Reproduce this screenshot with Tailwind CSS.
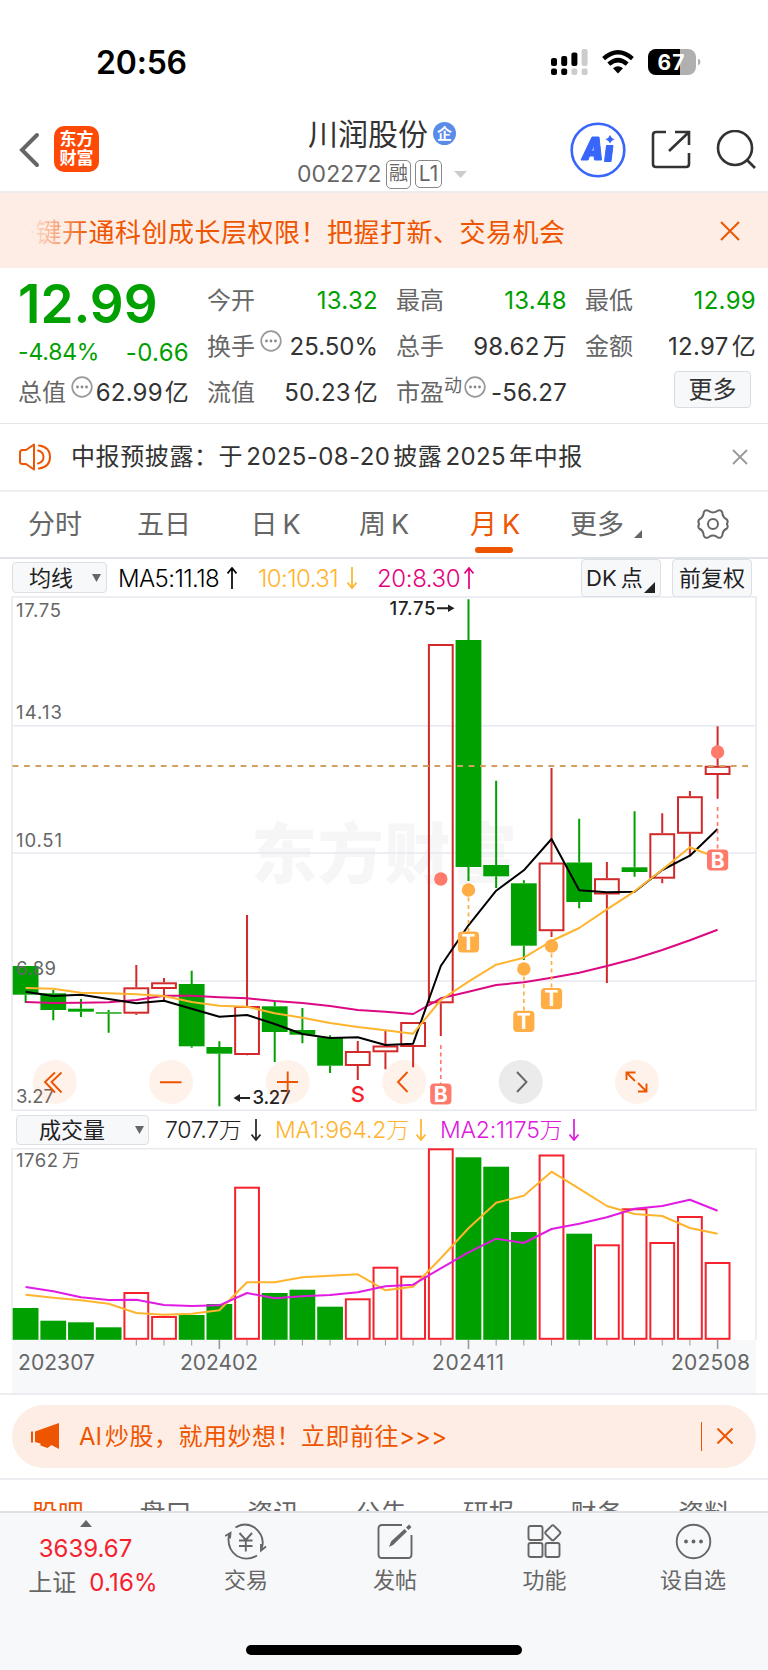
<!DOCTYPE html>
<html lang="zh-CN">
<head>
    <meta charset="UTF-8">
    <meta name="viewport" content="width=device-width, initial-scale=1.0">
    <title>川润股份 002272</title>
    <script src="https://cdn.jsdelivr.net/npm/@tailwindcss/browser@4"></script>
</head>
<body class="w-[768px] h-[1670px] overflow-hidden bg-white text-[#333] font-['Inter','Noto_Sans_CJK_SC',sans-serif] flex flex-col whitespace-nowrap">

    <!-- Status bar -->
    <div class="h-[104px] shrink-0 flex items-start pl-[96px] pr-[67px] pt-[42px]">
        <span class="text-[32px] leading-[41px] font-semibold text-black tracking-[-0.2px]">20:56</span>
        <div class="ml-auto flex items-center h-[40px] gap-[14px]">
            <svg width="37" height="26" viewBox="0 0 37 26">
                <g fill="#000">
                    <rect x="0" y="9" width="6" height="8" rx="2"/><rect x="10.200" y="7" width="6" height="10" rx="2"/><rect x="20.400" y="3.500" width="6" height="13.500" rx="2"/>
                    <rect x="0" y="19.500" width="6" height="6.500" rx="2"/><rect x="10.200" y="19.500" width="6" height="6.500" rx="2"/>
                </g>
                <g fill="#ccc">
                    <rect x="30.600" y="0" width="6" height="17" rx="2"/><rect x="20.400" y="19.500" width="6" height="6.500" rx="2"/><rect x="30.600" y="19.500" width="6" height="6.500" rx="2"/>
                </g>
            </svg>
            <svg width="32" height="24" viewBox="0 0 32 24" fill="none" stroke="#000" stroke-width="4.400">
                <path d="M1.600 8.600Q16 -4 30.400 8.600"/>
                <path d="M6.800 14.200Q16 6 25.200 14.200"/>
                <path d="M11 18.300Q16 14.200 21 18.300L16 23.600Z" fill="#000" stroke="none"/>
            </svg>
            <svg width="53" height="26" viewBox="0 0 53 26">
                <defs><clipPath id="bat"><rect width="48" height="26" rx="8"/></clipPath></defs>
                <g clip-path="url(#bat)"><rect width="48" height="26" fill="#b0b0b0"/><rect width="32" height="26" fill="#000"/></g>
                <path d="M50 9.500q2.500 1 2.500 3.500t-2.500 3.500z" fill="#b0b0b0"/>
                <text x="9.500" y="20.500" font-size="21" font-weight="700" fill="#fff" textLength="27">67</text>
            </svg>
        </div>
    </div>

    <!-- Header -->
    <header class="relative h-[89px] shrink-0 border-b-2 border-[#ececee] flex items-start">
        <svg class="ml-[18px] mt-[28px]" width="22" height="36" viewBox="0 0 22 36" fill="none" stroke="#666" stroke-width="4"><path d="M19 3L4 18L19 33" stroke-linecap="round"/></svg>
        <div class="ml-[14px] mt-[22px] w-[45px] h-[46px] rounded-[10px] bg-[#ff4a05] text-white font-bold text-[17px] leading-[19px] flex flex-col items-center justify-center">
            <span>东方</span><span>财富</span>
        </div>
        <div class="absolute left-[296px] top-0 w-[175px]">
            <div class="flex items-center h-[60px] pl-[12px] text-[30px]">
                <span>川润股份</span>
                <span class="ml-[5px] -mt-[2px] size-[23px] rounded-full bg-[#5b8be8] text-white text-[15px] leading-none font-bold flex items-center justify-center">企</span>
            </div>
            <div class="flex items-center h-[28px] -mt-[4px] text-[#666]">
                <span class="w-[90px] text-[23px] tracking-[0.100px] pl-px">002272</span>
                <span class="w-[25px] h-[29px] border-[1.5px] border-[#888] rounded-[5px] text-[19px] flex items-center justify-center">融</span>
                <span class="ml-[4px] w-[27px] h-[28px] border-[1.5px] border-[#888] rounded-[5px] text-[21px] flex items-center justify-center">L1</span>
                <svg class="ml-[12px]" width="13" height="7"><path d="M0 0H13L6.500 7Z" fill="#ccc"/></svg>
            </div>
        </div>
        <div class="ml-auto flex mt-[18px] pr-[12px]">
            <svg width="56" height="56" viewBox="0 0 56 56">
                <circle cx="28" cy="28" r="26.300" fill="none" stroke="#3866fb" stroke-width="2.600"/>
                <path d="M11 38L22 15H29L31.500 38H24.500L24 34H19.500L18 38ZM21.500 29H24V23Z" fill="#3866fb" fill-rule="evenodd" stroke="#3866fb" stroke-linejoin="round"/>
                <path d="M36.500 23.500H43L41 39.500H34.500Z" fill="#3866fb" stroke="#3866fb" stroke-linejoin="round"/>
                <path d="M40 13Q41 16 44.500 17.200Q41 18.500 40 21.500Q39 18.500 35.500 17.200Q39 16 40 13Z" fill="#3866fb"/>
            </svg>
            <svg class="ml-[24px] mt-[8px]" width="42" height="40" viewBox="0 0 42 40" fill="none" stroke="#333" stroke-width="2.600">
                <path d="M16 2H6Q3 2 3 5V34Q3 37 6 37H36Q39 37 39 34V23"/><path d="M25 2H39V15M38 3L19 21"/>
            </svg>
            <svg class="ml-[22px] mt-[8px]" width="42" height="42" viewBox="0 0 42 42" fill="none" stroke="#333" stroke-width="2.600"><circle cx="21" cy="18" r="17"/><path d="M33 30L41 38"/></svg>
        </div>
    </header>

    <!-- Promo banner -->
    <div class="h-[75px] shrink-0 bg-[#feede5] text-[#ee5500] flex items-center pl-[28px] pr-[28px]">
        <div class="relative overflow-hidden w-[560px] pt-[3px]">
            <span class="-ml-[19px] text-[26px] tracking-[0.500px]">一键开通科创成长层权限！把握打新、交易机会</span>
            <div class="absolute inset-y-0 left-0 w-[62px] bg-linear-to-r from-[#feede5] to-[#feede5]/0"></div>
        </div>
        <svg class="ml-auto" width="20" height="20" fill="none" stroke="#ee5500" stroke-width="2"><path d="M1 1L19 19M19 1L1 19"/></svg>
    </div>

    <!-- Quote -->
    <section class="h-[156px] shrink-0 border-b border-[#e4e6ea] grid grid-cols-[repeat(4,171px)] gap-x-[18px] pl-[18px] pt-[10px] text-[24px] leading-[46px]">
        <div class="flex flex-col">
            <div class="h-[52px] leading-[52px] text-[53px] font-semibold text-[#00a000]">12.99</div>
            <div class="h-[40px] leading-[45px] flex justify-between text-[23px] text-[#00a000]"><span class="tracking-[-0.200px]">-4.84%</span><span class="text-[24px] tracking-[0.300px]">-0.66</span></div>
            <div class="h-[46px] flex justify-between">
                <span class="text-[#666] flex">总值<svg class="ml-[5px] mt-[6px]" width="22" height="22"><use href="#more"/></svg></span>
                <span class="tracking-[0.200px] flex gap-[2px]">62.99<i class="not-italic">亿</i></span>
            </div>
        </div>
        <div>
            <div class="flex justify-between"><span class="text-[#666]">今开</span><span class="text-[#00a000] tracking-[0.300px]">13.32</span></div>
            <div class="flex justify-between"><span class="text-[#666] flex">换手<svg class="ml-[5px] mt-[6px]" width="22" height="22"><use href="#more"/></svg></span><span>25.50%</span></div>
            <div class="flex justify-between"><span class="text-[#666]">流值</span><span class="flex gap-[3px] tracking-[0.200px]">50.23<i class="not-italic">亿</i></span></div>
        </div>
        <div>
            <div class="flex justify-between"><span class="text-[#666]">最高</span><span class="text-[#00a000] tracking-[0.300px]">13.48</span></div>
            <div class="flex justify-between"><span class="text-[#666]">总手</span><span class="flex gap-[3px] tracking-[0.300px]">98.62<i class="not-italic">万</i></span></div>
            <div class="flex justify-between"><span class="text-[#666] flex">市盈<i class="not-italic text-[18px] leading-[31px]">动</i><svg class="ml-[2px] mt-[6px]" width="22" height="22"><use href="#more"/></svg></span><span class="tracking-[0.200px]">-56.27</span></div>
        </div>
        <div>
            <div class="flex justify-between"><span class="text-[#666]">最低</span><span class="text-[#00a000] tracking-[0.300px]">12.99</span></div>
            <div class="flex justify-between"><span class="text-[#666]">金额</span><span class="flex gap-[3px] tracking-[0.300px]">12.97<i class="not-italic">亿</i></span></div>
            <div class="ml-auto mr-[5px] mt-[1px] w-[77px] h-[37px] border border-[#d9dce3] rounded-[4px] bg-[#f7f8fa] flex items-center justify-center">更多</div>
        </div>
    </section>
    <svg class="hidden">
        <symbol id="more" viewBox="0 0 22 22"><circle cx="11" cy="11" r="9.800" fill="none" stroke="#999" stroke-width="1.700"/><g fill="#888"><circle cx="6.500" cy="11" r="1.400"/><circle cx="11" cy="11" r="1.400"/><circle cx="15.500" cy="11" r="1.400"/></g></symbol>
    </svg>

    <!-- Notice -->
    <div class="h-[68px] shrink-0 border-b-2 border-[#eee] flex items-center pl-[18px] pr-[20px]">
        <svg width="34" height="28" viewBox="0 0 34 28" fill="none" stroke="#ee5500" stroke-width="2" stroke-linejoin="round" stroke-linecap="round">
            <path d="M2 9.500Q2 7 4.500 7H8L16 1.500V26.500L8 21H4.500Q2 21 2 18.500Z"/><path d="M20 7.500Q25.500 9 25.500 14T20 20.500M21 2.500Q32 4 32 14T21 25.500"/>
        </svg>
        <span class="ml-[19px] text-[24px] flex tracking-[0.600px]">中报预披露：于<span class="mx-[3px] tracking-[0.400px]">2025-08-20</span>披露<span class="mx-[3px] tracking-[0.400px]">2025</span>年中报</span>
        <svg class="ml-auto" width="16" height="16" fill="none" stroke="#999" stroke-width="1.800"><path d="M1 1L15 15M15 1L1 15"/></svg>
    </div>

    <!-- Period tabs -->
    <nav class="h-[67px] shrink-0 border-b-2 border-[#e1e3ea] flex items-center text-[27px] text-[#666]">
        <span class="w-[110px] pt-[2px] text-center">分时</span>
        <span class="w-[108px] pt-[2px] text-center">五日</span>
        <span class="w-[115px] pt-[2px] text-center">日<span class="ml-[5px]">K</span></span>
        <span class="w-[102px] pt-[2px] text-center">周<span class="ml-[5px]">K</span></span>
        <span class="relative w-[120px] h-full leading-[66px] text-center text-[#ee5500]">月<span class="ml-[5px]">K</span><i class="absolute left-[40px] bottom-[4px] w-[38px] h-[6px] rounded-full bg-[#ee5500]"></i></span>
        <span class="ml-[15px] pt-[2px]">更多</span>
        <svg class="ml-[10px] mt-[18px]" width="8" height="8"><path d="M8 0V8H0Z" fill="#666"/></svg>
        <svg class="ml-[54px] -mt-px" width="34" height="32" viewBox="-17 -16 34 32" fill="none" stroke="#666" stroke-width="2" stroke-linejoin="round">
            <circle r="5"/>
            <path d="M-8 -13.400Q-5.500 -14.500 -3.600 -12.600Q0 -10.600 3.600 -12.600Q5.500 -14.500 8 -13.400Q9.600 -12.300 9.600 -9.400Q10.500 -6 13.600 -4.800Q15.600 -3 13.900 0Q15.600 3 13.600 4.800Q10.500 6 9.600 9.400Q9.600 12.300 8 13.400Q5.500 14.500 3.600 12.600Q0 10.600 -3.600 12.600Q-5.500 14.500 -8 13.400Q-9.600 12.300 -9.600 9.400Q-10.500 6 -13.600 4.800Q-15.600 3 -13.900 0Q-15.600 -3 -13.600 -4.800Q-10.500 -6 -9.600 -9.400Q-9.600 -12.300 -8 -13.400Z"/>
        </svg>
    </nav>

    <!-- MA row -->
    <div class="h-[37px] shrink-0 flex items-center pl-[12px] text-[22px] text-[#222]">
        <div class="w-[95px] h-[31px] border border-[#dcdfe6] rounded-[4px] bg-[#f7f8fa] flex items-center pl-[16px] pt-px">均线<svg class="ml-[19px]" width="9" height="8"><path d="M0 0H9L4.500 8Z" fill="#666"/></svg></div>
        <span class="ml-[11px] w-[109px] pt-[2px] text-[24px] font-light text-black tracking-[-0.6px]">MA5:11.18</span>
        <svg width="10" height="22" fill="none" stroke="#000" stroke-width="1.700"><path d="M5 22V1M0.500 6.500L5 1L9.500 6.500"/></svg>
        <span class="ml-[21px] w-[89px] pt-[2px] text-[24px] font-light text-[#ffb42e] tracking-[-0.6px]">10:10.31</span>
        <svg width="10" height="22" fill="none" stroke="#ffb42e" stroke-width="1.700"><path d="M5 0V21M0.500 15.500L5 21L9.500 15.500"/></svg>
        <span class="ml-[20px] w-[87px] pt-[2px] text-[24px] font-light text-[#e4007f] tracking-[-0.4px]">20:8.30</span>
        <svg width="10" height="22" fill="none" stroke="#e4007f" stroke-width="1.700"><path d="M5 22V1M0.500 6.500L5 1L9.500 6.500"/></svg>
        <div class="ml-auto relative w-[80px] h-[38px] border border-[#dcdfe6] rounded-[4px] bg-[#f7f8fa] flex items-center pl-[4px] pt-px">DK<span class="ml-[4px]">点</span>
            <svg class="absolute right-[5px] bottom-[3px]" width="11" height="11"><path d="M11 0V11H0Z" fill="#222"/></svg>
        </div>
        <div class="ml-[11px] mr-[16px] w-[80px] h-[38px] border border-[#dcdfe6] rounded-[4px] bg-[#f7f8fa] flex items-center justify-center pt-px">前复权</div>
    </div>

    <!-- K line chart -->
    <svg id="kline" class="shrink-0 block" width="768" height="515" viewBox="0 596 768 515">
        <text x="251" y="878" font-size="66" font-weight="900" fill="#f6f6f6" textLength="266">东方财富</text>
        <g stroke="#e6e9f0" stroke-width="1.500" fill="none">
            <path d="M12 597H756V1110.200H12ZM12 725.700H756M12 853H756M12 981H756"/>
        </g>
        <g id="candles"></g>
        <path d="M12.600 766H752" stroke="#d2a060" stroke-width="2" stroke-dasharray="5.800 5.600"/>
        <g id="klineMa" fill="none" stroke-width="2" stroke-linejoin="round"></g>
        <g id="marks" font-weight="700"></g>
        <g font-size="18.500" fill="#666">
            <text x="16" y="617" textLength="45">17.75</text>
            <text x="16" y="719" textLength="46">14.13</text>
            <text x="16" y="847" textLength="46">10.51</text>
            <text x="16" y="975" textLength="40">6.89</text>
            <text x="16" y="1103" textLength="38">3.27</text>
        </g>
        <g font-size="18.500" font-weight="500" fill="#222">
            <text x="389.500" y="615" textLength="46">17.75</text>
            <text x="252.500" y="1104" textLength="38">3.27</text>
        </g>
        <g fill="#222"><path d="M437 607.300H448V604.500L454.500 608.300L448 612V609.300H437Z"/><path d="M250 1097H240V1094L233.500 1098L240 1102V1099H250Z"/></g>
        <g fill="#ee5500" fill-opacity=".08">
            <circle cx="54.700" cy="1082" r="22"/><circle cx="171" cy="1082" r="22"/><circle cx="287.700" cy="1082" r="22"/><circle cx="404.300" cy="1082" r="22"/><circle cx="637" cy="1082" r="22"/>
        </g>
        <circle cx="520.700" cy="1082" r="22" fill="#ebebeb"/>
        <g fill="none" stroke="#ee5500" stroke-width="1.900">
            <path d="M55 1072.500L45 1082L55 1092.500M61.500 1072.500L51.500 1082L61.500 1092.500"/>
            <path d="M160 1082.300H181.500M277 1082H298M287.700 1071.500V1092.500"/>
            <path d="M407.500 1072L398 1082L407.500 1092"/>
            <path d="M517 1072L526.500 1082L517 1092" stroke="#666"/>
            <path d="M626.500 1080V1072.500H635.500M627 1073L635 1081M638 1083L646 1091M646.500 1083.500V1091.500H638"/>
        </g>
    </svg>

    <!-- Volume row -->
    <div class="h-[37px] shrink-0 flex items-center pl-[16px] text-[22px] text-[#222]">
        <div class="w-[133px] h-[30px] border border-[#dcdfe6] rounded-[4px] bg-[#f7f8fa] flex items-center pl-[22px] pt-px">成交量<svg class="ml-[30px]" width="9" height="8"><path d="M0 0H9L4.500 8Z" fill="#666"/></svg></div>
        <span class="ml-[16px] w-[86px] pt-[2px] text-[23px] font-light tracking-[-0.3px]">707.7万</span>
        <svg width="10" height="22" fill="none" stroke="#222" stroke-width="1.700"><path d="M5 0V21M0.500 15.500L5 21L9.500 15.500"/></svg>
        <span class="ml-[14px] w-[141px] pt-[2px] text-[23px] font-light text-[#ffb42e] tracking-[-0.2px]">MA1:964.2万</span>
        <svg width="10" height="22" fill="none" stroke="#ffb42e" stroke-width="1.700"><path d="M5 0V21M0.500 15.500L5 21L9.500 15.500"/></svg>
        <span class="ml-[14px] w-[129px] pt-[2px] text-[23px] font-light text-[#dd19dd] tracking-[-0.2px]">MA2:1175万</span>
        <svg width="10" height="22" fill="none" stroke="#dd19dd" stroke-width="1.700"><path d="M5 0V21M0.500 15.500L5 21L9.500 15.500"/></svg>
    </div>

    <!-- Volume chart and date axis -->
    <svg class="shrink-0 block" width="768" height="245" viewBox="0 1148 768 245">
        <rect x="12" y="1340" width="744" height="53" fill="#f7f8fa"/>
        <path d="M12 1340V1148.700H756V1340" fill="none" stroke="#e9ebef" stroke-width="1.500"/>
        <g id="volume"></g>
        <g id="volumeMa" fill="none" stroke-width="2" stroke-linejoin="round"></g>
        <g id="ticks" stroke="#999"></g>
        <g fill="#666">
            <text x="16" y="1167" font-size="18.500" textLength="42">1762</text>
            <text x="62" y="1167" font-size="18">万</text>
            <g font-size="21">
                <text x="18" y="1370" textLength="77">202307</text>
                <text x="180" y="1370" textLength="78">202402</text>
                <text x="432" y="1370" textLength="72">202411</text>
                <text x="671" y="1370" textLength="79">202508</text>
            </g>
        </g>
    </svg>

    <!-- AI promo -->
    <div class="h-[87px] shrink-0 border-y-2 border-[#ededf1] px-[12px] pt-[10px]">
        <div class="h-[63px] rounded-full bg-[#feede5] text-[#ee5500] flex items-center pl-[18px] pr-[23px]">
            <svg class="-mt-px" width="30" height="26" viewBox="0 0 30 26" fill="#ee5500"><path d="M1 8.500H3V19.500H1ZM5 8.500L29 0V26L21.500 22L17.500 25L10.500 22.500V20.500L5 19Z"/></svg>
            <span class="ml-[19px] pt-px text-[24px] tracking-[0.500px] flex"><span class="mr-[3px] tracking-normal">AI</span>炒股，就用妙想！立即前往<span class="tracking-[0.200px]">&gt;&gt;&gt;</span></span>
            <i class="ml-auto w-[1.5px] h-[29px] bg-[#ee5500]"></i>
            <svg class="ml-[15px] -mt-[2px]" width="16" height="16" fill="none" stroke="#ee5500" stroke-width="2"><path d="M.5 .5L15.500 15.500M15.500 .5L.5 15.500"/></svg>
        </div>
    </div>

    <!-- Section tabs, cut off by the toolbar -->
    <nav class="h-[31px] shrink-0 overflow-hidden grid grid-cols-7 pl-[4px] pr-[10px] text-center text-[26px] leading-[68px] text-[#666]">
        <span class="text-[#ee5500]">股吧</span><span>盘口</span><span>资讯</span><span>公告</span><span>研报</span><span>财务</span><span>资料</span>
    </nav>

    <!-- Toolbar -->
    <footer class="relative h-[159px] shrink-0 border-t-2 border-[#dfe0e6] bg-[#f7f8fa] flex text-[22px] leading-[30px] text-[#666]">
        <div class="w-[171px] flex flex-col items-center pt-[7px]">
            <svg width="12" height="7"><path d="M0 7L6 0L12 7Z" fill="#666"/></svg>
            <span class="mt-[7px] text-[24px] leading-[30px] text-[#f5222d]">3639.67</span>
            <span class="mt-[4px] ml-[15px] text-[24px] leading-[30px] flex gap-[13px]">上证<span class="text-[#f5222d] tracking-[0.200px]">0.16%</span></span>
        </div>
        <div class="w-[149px] flex flex-col items-center pt-[10px] pl-px">
            <svg width="42" height="37" viewBox="0 0 42 37" fill="none" stroke="#666" stroke-width="1.900">
                <path d="M10.500 4.500Q20 -1.500 29.500 4.500Q39 12 37.500 22L36 27M41 23.500L36 27.500V21"/>
                <path d="M32 32.500Q22 38.500 12 33Q3 27 3.500 15L4.500 10M0 13L5.500 10L5 15.500"/>
                <path d="M14.500 10L20.800 17L27 10M20.800 17V28.500M14 17.500H27.500M14 23H27.500"/>
            </svg>
            <span class="mt-[5px]">交易</span>
        </div>
        <div class="w-[149px] flex flex-col items-center pt-[10px] pl-px">
            <svg width="36" height="37" viewBox="0 0 36 37" fill="none" stroke="#666" stroke-width="1.900">
                <path d="M25 2H5Q1.500 2 1.500 5.500V31.500Q1.500 35 5 35H31Q34.500 35 34.500 31.500V12"/>
                <path d="M12 24L14 18.500L27.500 6L30 8.500L16 22ZM29 4.500L32 1.500L34.500 4L31.500 7Z" fill="#666" stroke="none"/>
            </svg>
            <span class="mt-[5px]">发帖</span>
        </div>
        <div class="w-[149px] flex flex-col items-center pt-[10px] pl-[2px]">
            <svg width="35" height="37" viewBox="0 0 35 37" fill="none" stroke="#666" stroke-width="1.900">
                <rect x="1.500" y="3" width="14" height="14" rx="2"/><rect x="1.500" y="20" width="14" height="14" rx="2"/><rect x="18.500" y="20" width="14" height="14" rx="2"/>
                <rect x="20" y="4" width="11.600" height="11.600" rx="1.800" transform="rotate(45 25.800 9.800)"/>
            </svg>
            <span class="mt-[5px]">功能</span>
        </div>
        <div class="w-[149px] flex flex-col items-center pt-[10px] pl-px">
            <svg width="37" height="37" viewBox="0 0 37 37"><circle cx="18.500" cy="18.500" r="16.800" fill="none" stroke="#666" stroke-width="1.900"/><g fill="#666"><circle cx="11" cy="18.500" r="1.900"/><circle cx="18.500" cy="18.500" r="1.900"/><circle cx="26" cy="18.500" r="1.900"/></g></svg>
            <span class="mt-[5px]">设自选</span>
        </div>
        <i class="absolute left-[246px] bottom-[15px] w-[276px] h-[10px] rounded-full bg-black"></i>
    </footer>

    <script>
        const GREEN = '#00a000';
        const x = i => 25.6 + i * 27.68;

        // [up, body top, body bottom, wick top, wick bottom]
        const candles = [
            [0, 966, 994.7, 966, 1003], [0, 993.3, 1010, 990, 1020.3], [0, 1008.7, 1011.7, 999, 1017], [0, 1012.3, 1013.7, 1010, 1032.7],
            [1, 987.3, 1013.7, 965, 1015], [1, 982.3, 989, 978, 1001], [0, 984, 1046.3, 970.7, 1047.7], [0, 1047, 1053.7, 1041.3, 1106.3],
            [1, 1006, 1055, 915, 1055.3], [0, 1006.3, 1032, 1000.7, 1062], [0, 1030, 1034.7, 1008, 1043.3], [0, 1037.3, 1065.7, 1035.3, 1073],
            [1, 1051, 1066, 1041, 1080], [1, 1045.5, 1052.3, 1031, 1069.3], [1, 1022, 1047, 1022, 1067.3], [1, 644, 1003.3, 644, 1036],
            [0, 640, 867, 599.3, 881], [0, 865, 876.3, 780.7, 888], [0, 883.3, 945.7, 880.3, 960], [1, 862.5, 931.2, 768, 937],
            [0, 862.5, 902, 818.7, 908.3], [1, 878.2, 894.5, 862, 983], [0, 867.3, 872, 811.3, 876.7], [1, 833.2, 878.7, 813.3, 883.3],
            [1, 796.2, 833.8, 791, 855.7], [1, 765.8, 775, 726.3, 798.7]
        ];
        const ma5 = [991.7, 996, 994.7, 999, 1003.3, 1000.7, 1008.7, 1016.7, 1015, 1024, 1034, 1038, 1037.3, 1045, 1043.7, 966, 925.3, 890.7, 870.3, 839, 890.3, 892.3, 891.7, 870, 855.7, 829];
        const ma10 = [988, 988.7, 992.7, 993.3, 994.3, 996, 1002, 1005.7, 1006.7, 1013.3, 1017.7, 1023, 1027, 1030.3, 1033.7, 1000, 981.7, 964.7, 957.7, 941, 928, 909.3, 891.3, 869.7, 847.3, 858];
        const ma20 = [1002, 1003, 1002.7, 1002.3, 1000, 995.7, 995.7, 997.3, 998.3, 1001, 1003, 1006, 1010, 1011.7, 1014, 998.3, 991.7, 985, 982.3, 977.7, 972.7, 966, 958.7, 950, 940.3, 929.7];

        // [up, bar top]
        const volume = [
            [0, 1308], [0, 1320.7], [0, 1322.3], [0, 1327.3], [1, 1292], [1, 1316], [0, 1315], [0, 1304], [1, 1186.7], [0, 1293], [0, 1289.7], [0, 1306.7], [1, 1298.3],
            [1, 1266.7], [1, 1275.7], [1, 1148.3], [0, 1157.3], [0, 1166.7], [0, 1232], [1, 1154.5], [0, 1233.7], [1, 1244.3], [1, 1208.3], [1, 1242], [1, 1216], [1, 1262]
        ];
        const vol1 = [1294.7, 1297.7, 1300.3, 1303.7, 1313, 1314.7, 1313.7, 1310.3, 1282.3, 1282.3, 1277.3, 1275.7, 1274.3, 1290.3, 1286.7, 1258.3, 1228.3, 1202.7, 1195.7, 1171.7, 1188.7, 1206, 1214, 1216, 1228, 1233.7];
        const vol2 = [1287, 1291.3, 1297.3, 1300, 1299.7, 1305, 1306, 1305.3, 1293, 1298.3, 1296.3, 1295, 1292.3, 1286.3, 1284.7, 1268.3, 1252.3, 1238.7, 1243, 1229, 1223.7, 1217.3, 1208.7, 1206, 1199.7, 1210.7];

        function box(i, up, top, bottom, red) {
            if (up) {
                return `<rect x="${x(i) - 11.9}" y="${top + 1}" width="23.8" height="${bottom - top - 2}" fill="none" stroke="${red}" stroke-width="2"/>`;
            }
            return `<rect x="${x(i) - 12.9}" y="${top}" width="25.8" height="${bottom - top}" fill="${GREEN}"/>`;
        }
        function line(values, color) {
            return `<polyline stroke="${color}" points="${values.map((y, i) => x(i) + ',' + y).join(' ')}"/>`;
        }

        document.getElementById('candles').innerHTML = candles.map(([up, top, bottom, high, low], i) =>
            `<path d="M${x(i)} ${high}V${top}M${x(i)} ${bottom}V${low}" stroke="${up ? '#d22a2a' : GREEN}" stroke-width="2"/>` + box(i, up, top, bottom, '#d22a2a')
        ).join('');
        document.getElementById('klineMa').innerHTML = line(ma20, '#dc0a82') + line(ma5, '#000') + line(ma10, '#ffb42e');
        document.getElementById('volume').innerHTML = volume.map(([up, top], i) => box(i, up, top, 1339.8, '#f5222d')).join('');
        document.getElementById('volumeMa').innerHTML = line(vol1, '#ffb42e') + line(vol2, '#e21be2');

        let ticks = '';
        for (let i = 4; i < 26; i++) {
            const major = (i - 7) % 9 === 0;
            ticks += `<path d="M${x(i)} 1340V${major ? 1349 : 1345.5}" stroke-width="${major ? 1.6 : 1}"/>`;
        }
        document.getElementById('ticks').innerHTML = ticks;

        // [index, letter, dot y, dash start, badge centre y, colour]
        const marks = [
            [15, 'B', 879, 1045, 1094, '#ff7a6a'], [25, 'B', 752, 807, 860, '#ff7a6a'],
            [16, 'T', 890, 890, 942, '#ffae45'], [18, 'T', 969, 969, 1021.3, '#ffae45'], [19, 'T', 946, 946, 998.7, '#ffae45']
        ];
        document.getElementById('marks').innerHTML = marks.map(([i, letter, dot, from, y, color]) =>
            `<circle cx="${x(i)}" cy="${dot}" r="6.7" fill="${color}"/>
            <path d="M${x(i)} ${from}V${y - 10}" stroke="${color}" stroke-width="1.7" stroke-dasharray="4 3.5"/>
            <rect x="${x(i) - 10.6}" y="${y - 10.6}" width="21.2" height="21.2" rx="4" fill="${color}"/>
            <text x="${x(i)}" y="${y + 7.5}" font-size="21" fill="#fff" text-anchor="middle">${letter}</text>`
        ).join('') + `<text x="${x(12)}" y="1102" font-size="22" font-weight="500" fill="#f5222d" text-anchor="middle">S</text>`;
    </script>
</body>
</html>
